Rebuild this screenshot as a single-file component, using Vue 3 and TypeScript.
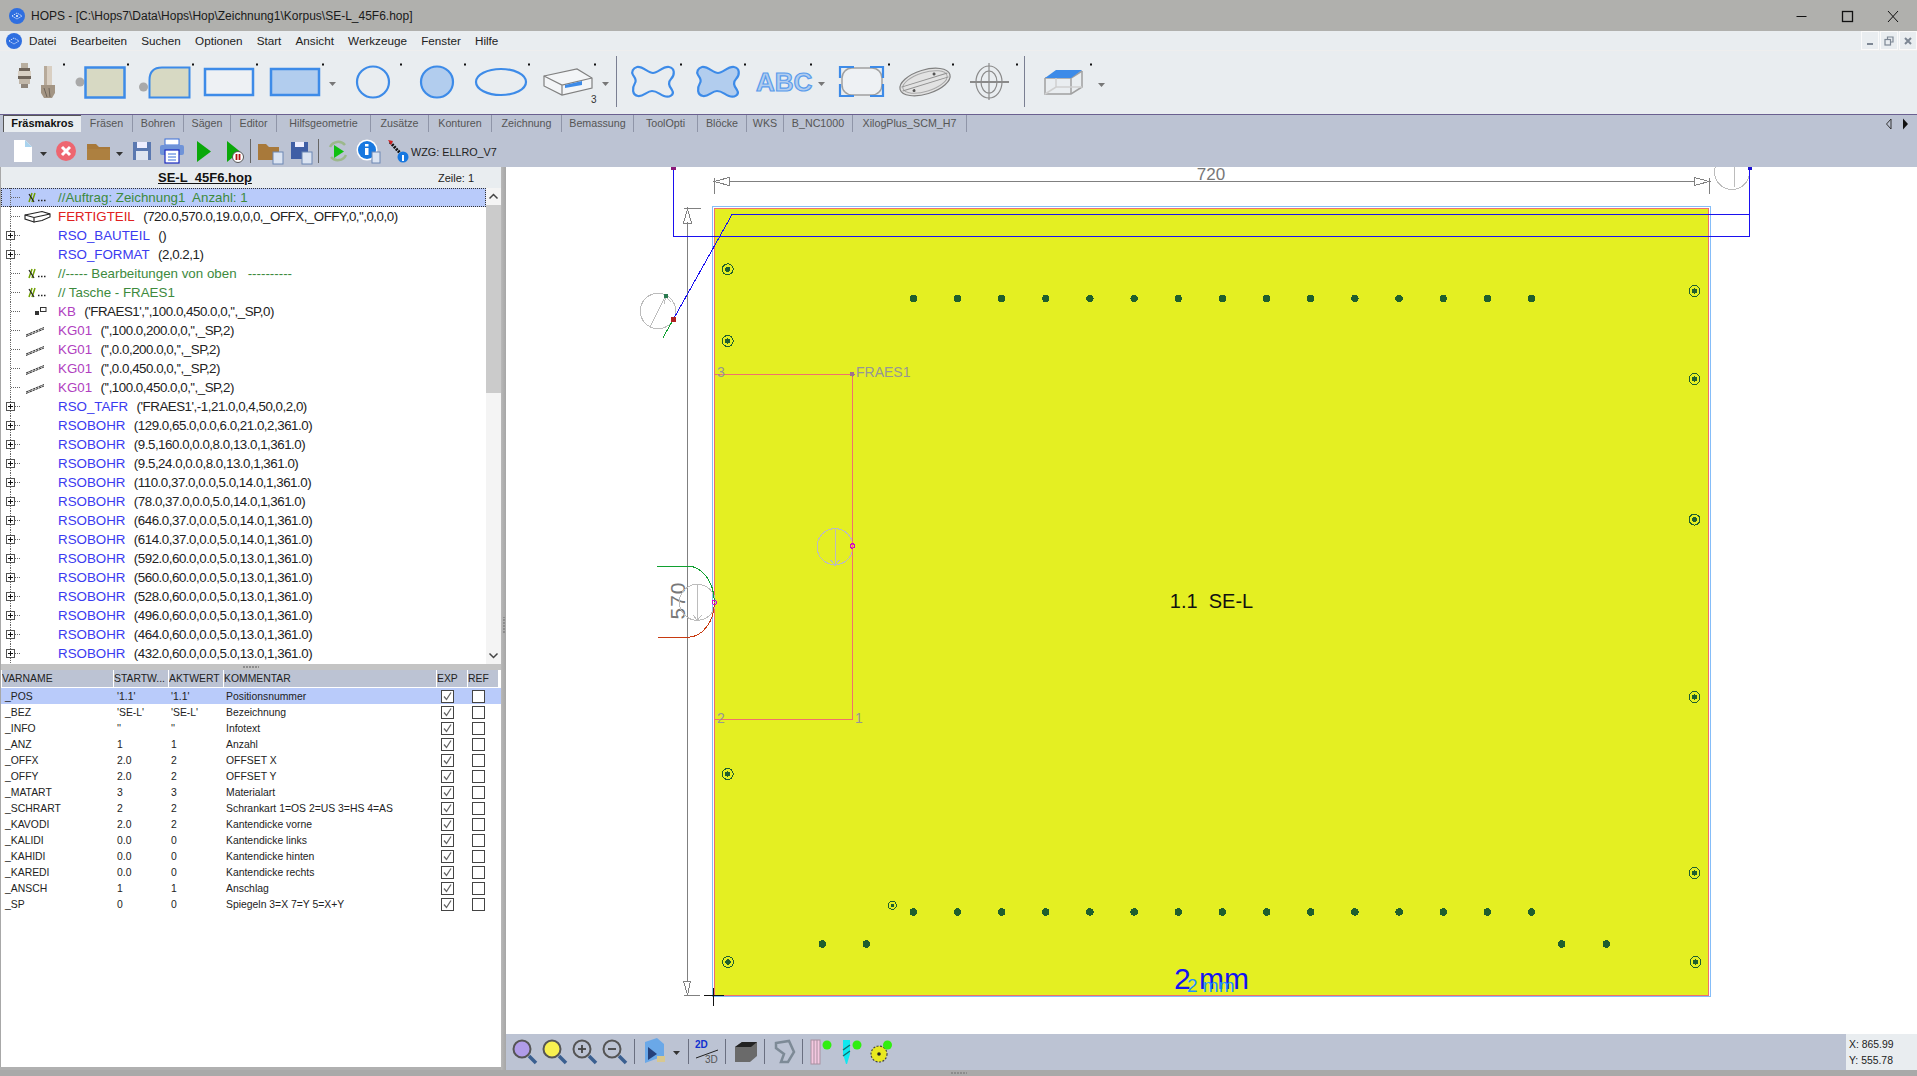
<script setup lang="ts">
interface TreeRow {
  name: string
  args?: string
  kind: 'comment' | 'part' | 'macro' | 'contour'
  icon?: 'comment' | 'part' | 'kb' | 'line'
  expand?: boolean
}

const menus = ['Datei', 'Bearbeiten', 'Suchen', 'Optionen', 'Start', 'Ansicht', 'Werkzeuge', 'Fenster', 'Hilfe']

const tabs = [
  { label: 'Fräsen', w: 52 },
  { label: 'Bohren', w: 51 },
  { label: 'Sägen', w: 47 },
  { label: 'Editor', w: 46 },
  { label: 'Hilfsgeometrie', w: 94 },
  { label: 'Zusätze', w: 58 },
  { label: 'Konturen', w: 63 },
  { label: 'Zeichnung', w: 70 },
  { label: 'Bemassung', w: 72 },
  { label: 'ToolOpti', w: 64 },
  { label: 'Blöcke', w: 49 },
  { label: 'WKS', w: 37 },
  { label: 'B_NC1000', w: 69 },
  { label: 'XilogPlus_SCM_H7', w: 114 }
]

const bohr = (args: string): TreeRow => ({ name: 'RSOBOHR', args, kind: 'macro', expand: true })
const kg = (args: string): TreeRow => ({ name: 'KG01', args, kind: 'contour', icon: 'line' })

const treeRows: TreeRow[] = [
  { name: '//Auftrag: Zeichnung1  Anzahl: 1', kind: 'comment', icon: 'comment' },
  { name: 'FERTIGTEIL', args: "(720.0,570.0,19.0,0,0,_OFFX,_OFFY,0,'',0,0,0)", kind: 'part', icon: 'part' },
  { name: 'RSO_BAUTEIL', args: '()', kind: 'macro', expand: true },
  { name: 'RSO_FORMAT', args: '(2,0.2,1)', kind: 'macro', expand: true },
  { name: '//----- Bearbeitungen von oben   ----------', kind: 'comment', icon: 'comment' },
  { name: '// Tasche - FRAES1', kind: 'comment', icon: 'comment' },
  { name: 'KB', args: "('FRAES1','',100.0,450.0,0,'',_SP,0)", kind: 'contour', icon: 'kb' },
  kg("('',100.0,200.0,0,'',_SP,2)"),
  kg("('',0.0,200.0,0,'',_SP,2)"),
  kg("('',0.0,450.0,0,'',_SP,2)"),
  kg("('',100.0,450.0,0,'',_SP,2)"),
  { name: 'RSO_TAFR', args: "('FRAES1',-1,21.0,0,4,50,0,2,0)", kind: 'macro', expand: true },
  bohr('(129.0,65.0,0.0,6.0,21.0,2,361.0)'),
  bohr('(9.5,160.0,0.0,8.0,13.0,1,361.0)'),
  bohr('(9.5,24.0,0.0,8.0,13.0,1,361.0)'),
  bohr('(110.0,37.0,0.0,5.0,14.0,1,361.0)'),
  bohr('(78.0,37.0,0.0,5.0,14.0,1,361.0)'),
  bohr('(646.0,37.0,0.0,5.0,14.0,1,361.0)'),
  bohr('(614.0,37.0,0.0,5.0,14.0,1,361.0)'),
  bohr('(592.0,60.0,0.0,5.0,13.0,1,361.0)'),
  bohr('(560.0,60.0,0.0,5.0,13.0,1,361.0)'),
  bohr('(528.0,60.0,0.0,5.0,13.0,1,361.0)'),
  bohr('(496.0,60.0,0.0,5.0,13.0,1,361.0)'),
  bohr('(464.0,60.0,0.0,5.0,13.0,1,361.0)'),
  bohr('(432.0,60.0,0.0,5.0,13.0,1,361.0)')
]

const variables = [
  ['_POS', "'1.1'", "'1.1'", 'Positionsnummer'],
  ['_BEZ', "'SE-L'", "'SE-L'", 'Bezeichnung'],
  ['_INFO', "''", "''", 'Infotext'],
  ['_ANZ', '1', '1', 'Anzahl'],
  ['_OFFX', '2.0', '2', 'OFFSET X'],
  ['_OFFY', '2.0', '2', 'OFFSET Y'],
  ['_MATART', '3', '3', 'Materialart'],
  ['_SCHRART', '2', '2', 'Schrankart 1=OS 2=US 3=HS 4=AS'],
  ['_KAVODI', '2.0', '2', 'Kantendicke vorne'],
  ['_KALIDI', '0.0', '0', 'Kantendicke links'],
  ['_KAHIDI', '0.0', '0', 'Kantendicke hinten'],
  ['_KAREDI', '0.0', '0', 'Kantendicke rechts'],
  ['_ANSCH', '1', '1', 'Anschlag'],
  ['_SP', '0', '0', 'Spiegeln 3=X 7=Y 5=X+Y']
]

const toolDots = [63, 127, 192, 256, 322, 400, 464, 528, 594, 680, 744, 810, 888, 952, 1016, 1090]

// bohrungen auf der platte, seitenkoordinaten
const ringHoles = [
  [727.7, 269.3], [727.7, 341], [1694.5, 291], [1694.5, 379], [1694.5, 519.6], [1694.5, 697],
  [727.7, 774], [1694.5, 873], [728, 962], [1695.5, 962]
]
const rowX = Array.from({ length: 15 }, (_, i) => 913.3 + i * 44.16)
const pairHoles = [822.4, 866.3, 1561.8, 1606.3]
const blob = 'M6 1C12 0 17 7 22 7C27 7 32 0 38 1C44 2 44 9 40 13C37 16 37 19 41 24C44 29 38 32 33 30C28 28 26 25 21 25C16 25 12 31 7 30C1 29 1 22 4 17C6 14 4 12 2 9C0 6 2 2 6 1Z'
</script>

<template>
  <div class="app">
    <div class="titlebar">
      <svg class="logo" width="16" height="16" viewBox="0 0 16 16">
        <circle cx="8" cy="8" r="8" fill="#2f6fe0" />
        <path d="M3 8l5-3 5 3-5 3z" fill="none" stroke="#dfe9ff" stroke-width="1" stroke-dasharray="1.4 1" />
        <circle cx="8" cy="8" r="1" fill="#fff" />
      </svg>
      <span class="title-text">HOPS - [C:\Hops7\Data\Hops\Hop\Zeichnung1\Korpus\SE-L_45F6.hop]</span>
      <div class="winbtns">
        <svg width="120" height="14" viewBox="0 0 120 14" fill="none" stroke="#111">
          <path d="M2.500 7.500h10" />
          <rect x="48.500" y="2.500" width="10" height="10" stroke-width="1.300" />
          <path d="M94 2l10 11M104 2L94 13" />
        </svg>
      </div>
    </div>

    <div class="menubar">
      <svg class="menu-logo" width="16" height="16" viewBox="0 0 16 16">
        <circle cx="8" cy="8" r="8" fill="#2f6fe0" />
        <path d="M3 8l5-3 5 3-5 3z" fill="none" stroke="#dfe9ff" stroke-width="1" stroke-dasharray="1.4 1" />
      </svg>
      <span v-for="m in menus" :key="m" class="menu-item">{{ m }}</span>
      <div class="mdi-btns">
        <span class="mdi-btn"><svg width="10" height="10" viewBox="0 0 10 10"><path d="M2 8h6" stroke="#7d8794" stroke-width="2" /></svg></span>
        <span class="mdi-btn"><svg width="10" height="10" viewBox="0 0 10 10" fill="none" stroke="#7d8794" stroke-width="1.200"><rect x="1" y="3.500" width="5.500" height="5.500" /><path d="M3.500 3.500V1H9v5H6.500" /></svg></span>
        <span class="mdi-btn"><svg width="10" height="10" viewBox="0 0 10 10"><path d="M2 2l6 6M8 2L2 8" stroke="#7d8794" stroke-width="2" /></svg></span>
      </div>
    </div>

    <div class="toolbar">
      <svg width="1200" height="63" viewBox="0 51 1200 63">
        <rect v-for="x in toolDots" :key="x" :x="x" y="63.500" width="2" height="2" fill="#111" />
        <!-- fraeser -->
        <g>
          <rect x="21" y="63" width="7" height="5" fill="#b8ae9f" />
          <rect x="19" y="68" width="11" height="3" fill="#6f655a" />
          <rect x="18" y="71" width="13" height="5" fill="#d8d0c4" />
          <rect x="18" y="76" width="13" height="3" fill="#6f655a" />
          <rect x="19" y="79" width="11" height="5" fill="#c2b8aa" />
          <rect x="21" y="84" width="7" height="4" fill="#8f857a" />
          <rect x="44" y="66" width="8" height="19" fill="#d9cfc2" />
          <rect x="44" y="66" width="3" height="19" fill="#b7aa9a" />
          <path d="M41 85h14v8l-3 5h-8l-3-5z" fill="#a39584" />
          <path d="M44 88l3 9M49 88l1 9" stroke="#6f655a" />
        </g>
        <circle cx="80" cy="82" r="4.500" fill="#a9a9a9" />
        <rect x="85.500" y="67.500" width="39" height="30" fill="#d7d9c3" stroke="#3d8be8" stroke-width="2.500" />
        <circle cx="143.500" cy="87" r="4.500" fill="#a9a9a9" />
        <path d="M149.500 97.500V80Q149.500 67.500 162 67.500H189.500V97.500Z" fill="#d7d9c3" stroke="#3d8be8" stroke-width="2" />
        <rect x="205" y="69" width="48" height="26" fill="#eef1f4" stroke="#3d8be8" stroke-width="2.500" />
        <rect x="271" y="69" width="48" height="26" fill="#b2cdee" stroke="#3d8be8" stroke-width="2.500" />
        <path d="M329 82h7l-3.500 4z" fill="#777" />
        <ellipse cx="373" cy="82" rx="16" ry="15.500" fill="none" stroke="#3d8be8" stroke-width="2.200" />
        <ellipse cx="437" cy="82" rx="16" ry="15.500" fill="#b2cdee" stroke="#3d8be8" stroke-width="2.200" />
        <ellipse cx="501" cy="82" rx="25" ry="13" fill="none" stroke="#3d8be8" stroke-width="2.200" />
        <g fill="none" stroke="#808080" stroke-width="1.200">
          <path d="M544 76l33-7 15 9v10l-30 7-18-9z" fill="#f3f5f7" />
          <path d="M544 76l18 9 30-7M562 85v10" />
        </g>
        <path d="M565 85l17-4v4l-17 3z" fill="#3d8be8" />
        <text x="591" y="103" class="tb-num">3</text>
        <path d="M602 82h7l-3.500 4z" fill="#777" />
        <path d="M616.500 56v51" stroke="#7a7f92" />
        <path :d="blob" transform="translate(631 66)" fill="none" stroke="#3d8be8" stroke-width="2.200" />
        <path :d="blob" transform="translate(696 66)" fill="#b2cdee" stroke="#3d8be8" stroke-width="2.200" />
        <text x="756" y="91" class="tb-abc">ABC</text>
        <path d="M818 82h7l-3.500 4z" fill="#777" />
        <rect x="842" y="68" width="40" height="27" rx="10" fill="#eef1f4" stroke="#a0a0a0" stroke-width="1.500" />
        <path d="M840 78v-11h14M870 67h13v11M840 84v12h14M870 96h13V84" fill="none" stroke="#3d8be8" stroke-width="2.200" />
        <g transform="rotate(-17 925 82)">
          <ellipse cx="925" cy="82" rx="26" ry="12" fill="#e2e2e2" stroke="#808080" stroke-width="1.200" />
          <ellipse cx="925" cy="82" rx="23" ry="9.500" fill="none" stroke="#a8a8a8" />
          <path d="M901 80h48M901 84h48" stroke="#909090" />
          <circle cx="936" cy="77" r="1.500" fill="#555" /><circle cx="912" cy="87" r="1.500" fill="#555" />
        </g>
        <g fill="none" stroke="#8a8a8a" stroke-width="1.200">
          <ellipse cx="989" cy="82" rx="13" ry="16" />
          <ellipse cx="989" cy="82" rx="8" ry="11" />
          <path d="M989 63v37" />
          <path d="M970 82h39" stroke-width="2" />
        </g>
        <path d="M1024.500 56v51" stroke="#7a7f92" />
        <g fill="none" stroke="#a0a0a0" stroke-width="1.500">
          <path d="M1045 78v16h26l11-7V71" />
          <path d="M1045 78h26v16M1071 78l11-7" />
          <path d="M1045 94l11-7h26M1056 87V71" stroke="#cfcfcf" />
        </g>
        <path d="M1045 78l11-8h26l-11 8z" fill="#3d8be8" />
        <path d="M1098 83h7l-3.500 4z" fill="#777" />
      </svg>
    </div>

    <div class="tabbar">
      <span class="tab active">Fräsmakros</span>
      <span v-for="t in tabs" :key="t.label" class="tab" :style="{ width: t.w + 'px' }">{{ t.label }}</span>
      <div class="tab-nav">
        <svg width="26" height="12" viewBox="0 0 26 12">
          <path d="M5 1L0.500 6 5 11z" fill="none" stroke="#333" />
          <path d="M17 0.500l5 5.500-5 5.500z" fill="#111" />
        </svg>
      </div>
    </div>

    <div class="iconbar">
      <svg width="410" height="32" viewBox="0 135 410 32">
        <path d="M14 140h11l7 7v15H14z" fill="#fff" /><path d="M25 140l7 7h-7z" fill="#a9d3ee" />
        <path d="M40 152h7l-3.500 4z" fill="#333" />
        <circle cx="66" cy="151" r="10" fill="#ee6670" />
        <path d="M62 147l8 8M70 147l-8 8" stroke="#fff" stroke-width="3" />
        <path d="M87 144h9l3 3h11v13H87z" fill="#a8793a" /><rect x="87" y="149" width="23" height="11" fill="#ad8040" />
        <path d="M116 152h7l-3.500 4z" fill="#333" />
        <rect x="133" y="142" width="18" height="18" fill="#5a78b0" /><rect x="137" y="142" width="10" height="6" fill="#eef" /><rect x="136" y="151" width="12" height="9" fill="#dde4f0" />
        <rect x="165" y="139" width="14" height="6" fill="#fff" stroke="#3a6fd8" />
        <rect x="160" y="145" width="24" height="10" rx="2" fill="#6f93d8" />
        <rect x="165" y="150" width="14" height="13" fill="#fff" stroke="#1a2ac0" stroke-width="1.200" />
        <path d="M168 154h8M168 157h8M168 160h8" stroke="#3a6fd8" />
        <path d="M197 141l14 10.500-14 10.500z" fill="#0aa80a" />
        <path d="M227 141l13 10.500-13 10.500z" fill="#0aa80a" />
        <circle cx="238" cy="157" r="5.500" fill="#fff" stroke="#555" /><path d="M236.500 154v6M239.500 154v6" stroke="#b01010" stroke-width="1.800" />
        <path d="M250.500 139v24" stroke="#666" />
        <path d="M258 144h8l3 3h10v13h-21z" fill="#a8793a" /><rect x="273" y="152" width="10" height="12" fill="#dbe4f2" stroke="#6c88b4" />
        <rect x="291" y="142" width="17" height="17" fill="#3f5ea5" /><rect x="295" y="142" width="9" height="5" fill="#eef" /><rect x="302" y="152" width="10" height="12" fill="#dbe4f2" stroke="#6c88b4" />
        <path d="M318.500 139v24" stroke="#666" />
        <path d="M330 147a9 9 0 0 1 15-2M346 155a9 9 0 0 1-15 2" fill="none" stroke="#9cb88c" stroke-width="2.500" />
        <path d="M334 145l10 6.500-10 6.500z" fill="#10c010" />
        <circle cx="367" cy="150" r="10.500" fill="#fff" />
        <circle cx="367" cy="150" r="9" fill="#1878e0" /><path d="M365 148h3.500v7H365zM365 144h3.500v2.500H365z" fill="#fff" />
        <rect x="372" y="152" width="8" height="11" fill="#dbe4f2" stroke="#6c88b4" />
        <path d="M390 142l10 11" stroke="#111" stroke-width="3" stroke-dasharray="2 1" /><path d="M388 140l5 1-2 4z" fill="#d02020" />
        <circle cx="403" cy="157" r="5.500" fill="#1878e0" /><path d="M402 155h2v6h-2z" fill="#fff" />
      </svg>
      <span class="wzg">WZG: ELLRO_V7</span>
    </div>

    <div class="main">
      <div class="left">
        <div class="file-head">
          <span class="file-name">SE-L_45F6.hop</span>
          <span class="file-line">Zeile: 1</span>
        </div>

        <div class="tree">
          <div class="tree-list">
            <div v-for="(row, i) in treeRows" :key="i" :class="['tree-row', { selected: i === 0 }]">
              <svg class="gutter" width="58" height="19" viewBox="0 0 58 19">
                <path d="M10.500 0v19" stroke="#666" stroke-dasharray="1 1" />
                <path d="M11 9.500h9" stroke="#666" stroke-dasharray="1 1" />
                <g v-if="row.expand">
                  <rect x="6.500" y="5.500" width="8" height="8" fill="#fff" stroke="#555" />
                  <path d="M8 9.500h5M10.500 7v5" stroke="#111" />
                </g>
                <g v-if="row.icon === 'comment'">
                  <path d="M29 14l3-9M32 14l3-9" stroke="#6f9f00" stroke-width="1.500" />
                  <path d="M29 6l5 8" stroke="#222" stroke-width="1.200" />
                  <path d="M38 12.500h1.500M41 12.500h1.500M44 12.500h1.500" stroke="#222" stroke-width="1.500" />
                </g>
                <g v-if="row.icon === 'part'" fill="none" stroke="#222" stroke-width="1.100">
                  <path d="M25 8l17-3.500 8 2.500v3l-8 3.500-8 1.500-9-3z" fill="#fff" />
                  <path d="M25 8l9 2.500 16-3.500M34 10.500v5" />
                </g>
                <g v-if="row.icon === 'kb'">
                  <rect x="35" y="9" width="4" height="4" fill="#333" />
                  <rect x="40.500" y="5.500" width="5.500" height="4" fill="#fff" stroke="#333" />
                </g>
                <g v-if="row.icon === 'line'" stroke="#333" stroke-width="1">
                  <path d="M26 14l18-7.500M26 15.500l18-7.500" stroke-dasharray="3 0.500" />
                </g>
              </svg>
              <span :class="['tree-name', row.kind]">{{ row.name }}</span><span v-if="row.args" class="tree-args">{{ '  ' + row.args }}</span>
            </div>
          </div>
          <div class="scrollbar">
            <svg width="15" height="17" viewBox="0 0 15 17"><path d="M3.500 10.500l4-4 4 4" fill="none" stroke="#444" stroke-width="1.500" /></svg>
            <div class="scroll-track"><div class="scroll-thumb"></div></div>
            <svg width="15" height="17" viewBox="0 0 15 17"><path d="M3.500 6.500l4 4 4-4" fill="none" stroke="#444" stroke-width="1.500" /></svg>
          </div>
        </div>

        <div class="hsplit"><span class="grip"></span></div>

        <div class="vars">
          <div class="var-head">
            <span>VARNAME</span><span>STARTW...</span><span>AKTWERT</span><span>KOMMENTAR</span><span>EXP</span><span>REF</span>
          </div>
          <div v-for="(v, i) in variables" :key="v[0]" :class="['var-row', { selected: i === 0 }]">
            <span class="c1">{{ v[0] }}</span>
            <span class="c2">{{ v[1] }}</span>
            <span class="c3">{{ v[2] }}</span>
            <span class="c4">{{ v[3] }}</span>
            <span class="cb-cell">
              <span class="cb">
                <svg width="11" height="11" viewBox="0 0 11 11"><path d="M2 5.500l2.500 3L9 1.500" fill="none" stroke="#666" stroke-width="1.300" /></svg>
              </span>
            </span>
            <span class="cb-cell"><span class="cb"></span></span>
          </div>
        </div>
      </div>

      <div class="vsplit"><span class="grip-v"></span></div>

      <div class="right">
        <div class="canvas">
          <svg class="drawing" width="1411" height="867" viewBox="506 167 1411 867">
            <rect x="712.500" y="206.500" width="998" height="790" fill="#fff" stroke="#85bdf8" />
            <rect x="714.500" y="208.500" width="994" height="787" fill="#e4ef22" stroke="#f0706c" />

            <!-- masslinien -->
            <g fill="none" stroke="#808080" stroke-width="1">
              <path d="M714.500 178v16M1709 178v16" />
              <path d="M729 181.500H1695" />
              <path d="M714.500 181.500l14.500-4v8zM1709 181.500l-14.500-4v8z" />
              <path d="M687.500 222V982" />
              <path d="M684 208.500h17M684 995.500h16" />
              <path d="M687.500 209l-4 14h8zM687.500 995l-4-14h7z" />
            </g>
            <text x="1211" y="179.500" text-anchor="middle" class="dim">720</text>
            <text class="dim big" transform="translate(685 600.500) rotate(-90)" text-anchor="middle">570</text>

            <g fill="none" stroke="#bcbcbc">
              <circle cx="1732" cy="172" r="17.500" />
              <path d="M1734 167v20" />
              <circle cx="658" cy="311" r="17.700" />
              <path d="M665.700 295.700L650 326.700" />
              <path d="M665.700 296l-1.500 8M665.700 296l5 6" />
              <circle cx="697.300" cy="602.300" r="18" />
              <path d="M697.300 584V620M693 615l4.300 5.500 4.300-5.500" />
              <circle cx="835" cy="546.700" r="18" />
              <path d="M835 528V565M830.700 560l4.300 5.500 4.300-5.500" />
            </g>

            <!-- fraesbahn -->
            <g fill="none" stroke="#1a10f0" stroke-width="1">
              <path d="M673.500 167V236.500H1749.500V167" />
              <path d="M673.300 319.300L732 214.500H1749.500" />
            </g>
            <path d="M673.300 319.300L663 337.700" stroke="#10a030" />
            <path d="M657 566H687.300A27 36.300 0 0 1 714.300 602" fill="none" stroke="#10a030" />
            <path d="M714.300 603A27 34.300 0 0 1 687.300 637.300H658" fill="none" stroke="#c83a10" />
            <path d="M852.500 546V566.700" stroke="#c83a10" />
            <rect x="671" y="317" width="4.500" height="4.500" fill="#b02020" />
            <rect x="664" y="294" width="3.500" height="3.500" fill="#2a7a50" />
            <rect x="671" y="167" width="4.500" height="2.500" fill="#8a1a7a" />
            <rect x="1748" y="167" width="4" height="2.500" fill="#1a10d0" />

            <!-- tasche -->
            <path d="M714.500 374.500H852.500V719.500H714.500" fill="none" stroke="#f0706c" />
            <circle cx="852.300" cy="374.300" r="2.400" fill="#a07090" />
            <circle cx="714.300" cy="602.300" r="2.200" fill="none" stroke="#d000d0" />
            <circle cx="852.300" cy="546" r="2.200" fill="none" stroke="#d000d0" />
            <text x="717" y="377" class="lbl">3</text>
            <text x="856" y="377" class="lbl">FRAES1</text>
            <text x="717" y="723" class="lbl">2</text>
            <text x="855" y="723" class="lbl">1</text>

            <!-- bohrungen -->
            <g v-for="(h, i) in ringHoles" :key="'r' + i">
              <circle :cx="h[0]" :cy="h[1]" r="5.500" fill="none" stroke="#1f5f2e" />
              <circle :cx="h[0]" :cy="h[1]" r="2.600" fill="#1f5f2e" />
            </g>
            <g>
              <circle cx="892.300" cy="905.300" r="4" fill="none" stroke="#1f5f2e" />
              <circle cx="892.300" cy="905.300" r="1.800" fill="#1f5f2e" />
            </g>
            <g fill="#1f5f2e">
              <circle v-for="x in rowX" :key="'t' + x" :cx="x" cy="298.500" r="3.700" />
              <circle v-for="x in rowX" :key="'b' + x" :cx="x" cy="912" r="3.700" />
              <circle v-for="x in pairHoles" :key="'p' + x" :cx="x" cy="944" r="3.700" />
            </g>

            <text x="1211.500" y="608" text-anchor="middle" class="part-label">{{ '1.1  SE-L' }}</text>
            <text x="1174" y="989" class="mm">2 mm</text>
            <text x="1187" y="992" class="mm-small">2 mm</text>

            <path d="M704 995.500H724M713.500 988V1006" stroke="#111" stroke-width="1" />
          </svg>
        </div>

        <div class="bottombar">
          <svg width="400" height="36" viewBox="506 1034 400 36">
            <g v-for="z in [{ x: 522, f: '#b09ce8' }, { x: 552, f: '#f8f050' }]" :key="z.x">
              <circle :cx="z.x" cy="1049" r="8.500" :fill="z.f" stroke="#555" stroke-width="2" />
              <path :d="`M${z.x + 7} 1056l7 7`" stroke="#3a5f90" stroke-width="3.500" />
            </g>
            <g v-for="x in [582, 612]" :key="x">
              <circle :cx="x" cy="1049" r="8.500" fill="none" stroke="#555" stroke-width="2" />
              <path :d="`M${x + 7} 1056l7 7`" stroke="#3a5f90" stroke-width="3.500" />
              <path :d="`M${x - 4} 1049h8`" stroke="#444" stroke-width="1.800" />
            </g>
            <path d="M582 1045v8" stroke="#444" stroke-width="1.800" />
            <path d="M634.500 1039v25M688.500 1039v25M725.500 1039v25M764.500 1039v25M802.500 1039v25" stroke="#6a6f80" />
            <path d="M645 1042l12-4 7 6v12l-19 7z" fill="#6aa8e8" /><path d="M648 1047l9 7-9 6z" fill="#25407a" />
            <rect x="657" y="1056" width="8" height="6" fill="#d8c890" />
            <path d="M673 1051h7l-3.500 4z" fill="#333" />
            <text x="695" y="1048" class="two-d">2D</text>
            <path d="M696 1058l22-8" stroke="#222" />
            <text x="705" y="1063" class="three-d">3D</text>
            <path d="M735 1047l7-5h15v14l-7 6h-15z" fill="#6a6a6a" /><path d="M735 1047l7-5h15l-6 5z" fill="#222" />
            <path d="M776 1043l13-2 5 11-6 10h-7l3-8-8-6z" fill="none" stroke="#7d8a96" stroke-width="2.500" />
            <rect x="811" y="1040" width="9" height="24" fill="#f4c8e0" stroke="#a890a0" /><path d="M814 1040v24M817 1040v24" stroke="#a890a0" />
            <circle cx="827" cy="1045" r="4.500" fill="#30ee10" />
            <path d="M843 1040h7v14l-3 10h-1l-3-10z" fill="#10e8f0" /><path d="M843 1050l7-5M843 1056l7-5" stroke="#107070" stroke-width="1.500" />
            <circle cx="857" cy="1045" r="4.500" fill="#30ee10" />
            <circle cx="879" cy="1054" r="8" fill="#e8e820" stroke="#444" stroke-width="1.200" stroke-dasharray="2 1.500" /><circle cx="879" cy="1054" r="1.800" fill="#222" />
            <circle cx="887.500" cy="1045" r="4.500" fill="#30ee10" />
          </svg>
          <div class="coords">
            <span>X: 865.99</span>
            <span>Y: 555.78</span>
          </div>
        </div>
      </div>
    </div>

    <div class="statusstrip"><span class="grip"></span></div>
  </div>
</template>

<style scoped>
.app {
  width: 1917px;
  height: 1076px;
  display: flex;
  flex-direction: column;
  overflow: hidden;
  background: #e9edf0;
  font-family: "Liberation Sans", Arial, sans-serif;
  color: #111;
}

.titlebar {
  height: 31px;
  flex: none;
  background: #b0b0ad;
  display: flex;
  align-items: center;
  padding-left: 9px;
  box-sizing: border-box;
}

.title-text {
  margin-left: 6px;
  font-size: 12px;
  color: #1a1a1a;
}

.winbtns {
  margin-left: auto;
  margin-right: 3px;
  display: flex;
}

.menubar {
  height: 20px;
  flex: none;
  display: flex;
  align-items: center;
  padding-left: 6px;
  border-bottom: 1px solid #eeeeee;
  box-sizing: border-box;
  font-size: 11.7px;
  color: #222;
}

.menu-logo {
  margin-right: 7px;
}

.menu-item {
  margin-right: 14.2px;
}

.mdi-btns {
  margin-left: auto;
  display: flex;
  gap: 1px;
}

.mdi-btn {
  width: 16px;
  height: 17px;
  border: 1px solid #fafafa;
  display: flex;
  align-items: center;
  justify-content: center;
}

.toolbar {
  height: 63px;
  flex: none;
  border-bottom: 1px solid #6a6090;
  overflow: hidden;
}

.toolbar svg {
  display: block;
}

.tb-num {
  font-size: 10px;
  fill: #333;
}

.tb-abc {
  font-size: 26px;
  font-weight: 700;
  fill: #b2cdee;
  stroke: #5a9cec;
  stroke-width: 1.2px;
}

.tabbar {
  height: 20px;
  flex: none;
  background: #bcc3d3;
  display: flex;
  padding-left: 3px;
  font-size: 10.7px;
  color: #555;
}

.tab {
  display: flex;
  align-items: center;
  justify-content: center;
  height: 17px;
  padding-bottom: 2px;
  flex: none;
  border-right: 1px solid #8f95a8;
  box-sizing: border-box;
}

.tab.active {
  width: 78px;
  background: #e9edf0;
  color: #111;
  font-size: 11px;
  font-weight: 700;
  border: none;
  border-top: 1px solid #555;
  border-left: 1px solid #555;
}

.tab-nav {
  margin-left: auto;
  margin-right: 5px;
  display: flex;
  align-items: center;
  height: 17px;
}

.iconbar {
  height: 32px;
  flex: none;
  background: #bcc3d3;
  display: flex;
  align-items: center;
}

.wzg {
  margin-left: 1px;
  padding-top: 2px;
  font-size: 10.8px;
  color: #222;
}

.main {
  flex: 1;
  min-height: 0;
  display: flex;
  background: #b0b0b0;
}

.left {
  width: 501px;
  flex: none;
  display: flex;
  flex-direction: column;
  background: #fff;
  margin-bottom: 3px;
  border-left: 1px solid #a8a8a8;
  box-sizing: border-box;
}

.file-head {
  height: 21px;
  flex: none;
  background: #e9edf0;
  display: flex;
  align-items: center;
  font-size: 11px;
}

.file-name {
  margin-left: 157px;
  font-size: 13px;
  font-weight: 700;
  text-decoration: underline;
}

.file-line {
  margin-left: auto;
  margin-right: 27px;
  color: #222;
}

.tree {
  height: 476px;
  flex: none;
  display: flex;
}

.tree-list {
  flex: 1;
  min-width: 0;
  overflow: hidden;
}

.tree-row {
  height: 19px;
  display: flex;
  align-items: center;
  font-size: 13.33px;
  white-space: pre;
  box-sizing: border-box;
}

.tree-row.selected {
  background: #b9cbfa;
  outline: 1px dotted #333;
  outline-offset: -1px;
}

.gutter {
  flex: none;
  margin-left: -1px;
}

.tree-name.comment {
  color: #3d8a3d;
}

.tree-name.part {
  color: #e02020;
}

.tree-name.macro {
  color: #3a3af0;
}

.tree-name.contour {
  color: #b040c0;
}

.tree-args {
  margin-left: 2px;
  color: #222;
  letter-spacing: -0.48px;
}

.scrollbar {
  width: 15px;
  flex: none;
  display: flex;
  flex-direction: column;
  background: #f4f4f4;
}

.scrollbar svg {
  flex: none;
}

.scroll-track {
  flex: 1;
}

.scroll-thumb {
  height: 188px;
  background: #cbcbcb;
}

.hsplit {
  height: 6px;
  flex: none;
  background: #c4c4c4;
  display: flex;
  align-items: center;
  justify-content: center;
}

.grip {
  width: 16px;
  height: 2px;
  background: repeating-linear-gradient(90deg, #8c8c8c 0 2px, transparent 2px 3px);
}

.vars {
  flex: 1;
  font-size: 10.4px;
  color: #222;
}

.var-head,
.var-row {
  display: grid;
  grid-template-columns: 112px 55px 55px 213px 31px 31px;
  padding-left: 1px;
}

.var-head {
  height: 18px;
  align-items: center;
  margin-right: 1px;
}

.var-head span {
  height: 18px;
  line-height: 17px;
  background: #bcc3d3;
  border-right: 1px solid #fff;
  border-bottom: 1px solid #fff;
  box-sizing: border-box;
  overflow: hidden;
  white-space: nowrap;
}

.var-row {
  height: 16px;
  align-items: center;
}

.var-row.selected {
  background: #b9cbfa;
}

.c1 {
  padding-left: 3px;
}

.c2 {
  padding-left: 3px;
}

.c3 {
  padding-left: 2px;
}

.c4 {
  padding-left: 2px;
}

.cb-cell {
  padding-left: 4px;
  display: flex;
}

.cb {
  width: 13px;
  height: 13px;
  border: 1px solid #444;
  box-sizing: border-box;
  background: #fff;
  display: flex;
  align-items: center;
  justify-content: center;
}

.vsplit {
  width: 5px;
  flex: none;
  background: linear-gradient(90deg, #b8b8b8, #a6a6a6);
  display: flex;
  align-items: center;
  justify-content: center;
}

.grip-v {
  width: 2px;
  height: 16px;
  background: repeating-linear-gradient(0deg, #8c8c8c 0 2px, transparent 2px 3px);
  margin-top: 12px;
}

.right {
  flex: 1;
  min-width: 0;
  display: flex;
  flex-direction: column;
}

.canvas {
  flex: 1;
  min-height: 0;
  background: #fff;
  overflow: hidden;
}

.drawing {
  display: block;
  shape-rendering: crispEdges;
}

.dim {
  font-size: 17px;
  fill: #777;
}

.dim.big {
  font-size: 21px;
  letter-spacing: 1px;
}

.lbl {
  font-size: 14px;
  fill: #969696;
}

.part-label {
  font-size: 20px;
  fill: #111;
  white-space: pre;
}

.mm {
  font-size: 30px;
  fill: #1414f0;
}

.mm-small {
  font-size: 19px;
  fill: #1e90ff;
}

.two-d {
  font-size: 10px;
  font-weight: 700;
  fill: #1030d0;
}

.three-d {
  font-size: 10px;
  fill: #555;
}

.bottombar {
  height: 36px;
  flex: none;
  background: #bcc3d3;
  display: flex;
  justify-content: space-between;
}

.coords {
  width: 71px;
  background: #e9edf0;
  display: flex;
  flex-direction: column;
  justify-content: space-around;
  padding: 2px 0 2px 3px;
  box-sizing: border-box;
  font-size: 10.4px;
  color: #222;
}

.statusstrip {
  height: 6px;
  flex: none;
  background: #a9a9a9;
  display: flex;
  align-items: center;
  justify-content: center;
}
</style>

<style>
html,
body {
  margin: 0;
  padding: 0;
  overflow: hidden;
}
</style>
